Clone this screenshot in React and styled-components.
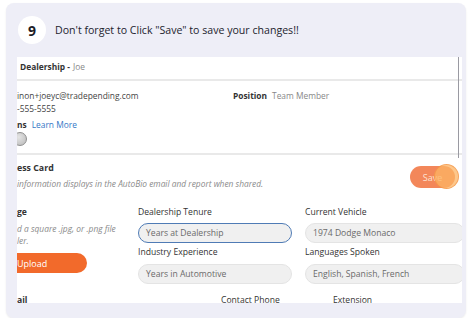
import React from "react";
import styled, { createGlobalStyle } from "styled-components";

const Global = createGlobalStyle`
  html, body { margin: 0; padding: 0; background: #ffffff; }
  body { font-family: "Open Sans", "Liberation Sans", sans-serif; }
`;

const Card = styled.div`
  margin: 3px 0 0 6px;
  width: 460px;
  height: 315px;
  background: #eeeef7;
  border-radius: 8px;
  box-shadow: 0 1px 2px rgba(0, 0, 0, 0.08);
  display: flex;
  flex-direction: column;
`;

const Header = styled.div`
  height: 54px;
  display: flex;
  align-items: center;
  gap: 9px;
  padding-left: 12px;
`;

const StepBadge = styled.div`
  width: 28px;
  height: 28px;
  border-radius: 50%;
  background: #ffffff;
  display: flex;
  align-items: center;
  justify-content: center;
  font-weight: 700;
  font-size: 14px;
  color: #1d1d26;
`;

const Title = styled.div`
  font-size: 10.6px;
  color: #23232e;
`;

const Shot = styled.div`
  margin-left: 11px;
  width: 445px;
  height: 246px;
  background: #ffffff;
  overflow: hidden;
  position: relative;
  color: #333;
  font-size: 8.4px;
  line-height: 13px;
`;

const ScrollThumb = styled.div`
  position: absolute;
  right: 3px;
  top: 0;
  width: 1.5px;
  height: 101px;
  background: #9a9aa2;
`;

const TopRow = styled.div`
  height: 24px;
  box-sizing: border-box;
  display: flex;
  align-items: flex-start;
  padding: 3px 0 0 3px;
  border-bottom: 2px solid #e9e9e9;
`;

const Bold = styled.span`
  font-weight: 700;
  color: #333;
`;

const Muted = styled.span`
  color: #888;
  margin-left: ${(p) => p.$gap || 4}px;
`;

const Info = styled.div`
  height: 74px;
  box-sizing: border-box;
  padding-top: 8px;
  border-bottom: 2px solid #e9e9e9;
  display: grid;
  grid-template-columns: 216px 1fr;
`;

const InfoCol = styled.div`
  display: flex;
  flex-direction: column;
`;

const Line = styled.div`
  color: ${(p) => p.$color || "#444"};
  margin-top: ${(p) => p.$mt || 0}px;
`;

const Link = styled.span`
  color: #3478c6;
  margin-left: 5px;
`;

const Toggle = styled.div`
  margin-left: -4px;
  margin-top: 1px;
  width: 14px;
  height: 14px;
  border-radius: 50%;
  background: radial-gradient(circle at 40% 35%, #e4e4e4, #b9b9b9);
  border: 1px solid #8f8f8f;
  box-sizing: border-box;
`;

const Section = styled.div`
  padding-top: 7px;
`;

const SectionHead = styled.div`
  display: flex;
  justify-content: space-between;
  align-items: flex-start;
`;

const SectionTitle = styled.div`
  font-weight: 700;
  color: #333;
  font-size: 8.8px;
`;

const Hint = styled.div`
  font-style: italic;
  color: #8a8a8a;
  margin-top: ${(p) => p.$mt || 0}px;
  line-height: 12px;
`;

const SaveWrap = styled.div`
  position: relative;
  margin: 4px 7px 0 0;
`;

const SaveButton = styled.div`
  width: 45px;
  height: 22px;
  border-radius: 11px;
  background: #f3875a;
  color: #fde2d2;
  font-size: 9px;
  display: flex;
  align-items: center;
  justify-content: center;
`;

const Highlight = styled.div`
  position: absolute;
  left: 24px;
  top: -2px;
  width: 25px;
  height: 25px;
  border-radius: 50%;
  background: rgba(252, 180, 100, 0.75);
  border: 1px solid rgba(240, 140, 60, 0.6);
  box-sizing: border-box;
`;

const FieldGrid = styled.div`
  margin-top: 16px;
  display: grid;
  grid-template-columns: 121px 167px 1fr;
`;

const Col = styled.div`
  display: flex;
  flex-direction: column;
`;

const Label = styled.div`
  color: #333;
  font-size: 8.6px;
  margin-top: ${(p) => p.$mt || 0}px;
  font-weight: ${(p) => (p.$bold ? 700 : 400)};
`;

const Input = styled.div`
  margin-top: ${(p) => p.$mt || 4}px;
  width: ${(p) => p.$w || 154}px;
  height: 20px;
  box-sizing: border-box;
  border-radius: 10px;
  background: #f0f0f0;
  border: ${(p) => (p.$focus ? "1.5px solid #4f7bb5" : "1px solid #e4e4e4")};
  color: #6a6a6a;
  font-size: 8.6px;
  display: flex;
  align-items: center;
  padding-left: 7px;
`;

const Upload = styled.div`
  margin-top: 6px;
  width: 70px;
  height: 20px;
  border-radius: 0 10px 10px 0;
  background: #f26a2b;
  color: #ffffff;
  display: flex;
  align-items: center;
  font-size: 9px;
`;

const BottomRow = styled.div`
  margin-top: 10px;
  display: grid;
  grid-template-columns: 204px 112px 1fr;
`;

export default function App() {
  return (
    <>
      <Global />
      <Card>
        <Header>
          <StepBadge>9</StepBadge>
          <Title>Don't forget to Click "Save" to save your changes!!</Title>
        </Header>
        <Shot>
          <ScrollThumb />
          <TopRow>
            <Bold>Dealership -</Bold>
            <Muted $gap={3}>Joe</Muted>
          </TopRow>
          <Info>
            <InfoCol>
              <Line>inon+joeyc@tradepending.com</Line>
              <Line>-555-5555</Line>
              <Line $mt={3}>
                <Bold>ns</Bold>
                <Link>Learn More</Link>
              </Line>
              <Toggle />
            </InfoCol>
            <InfoCol>
              <Line>
                <Bold>Position</Bold>
                <Muted $gap={5}>Team Member</Muted>
              </Line>
            </InfoCol>
          </Info>
          <Section>
            <SectionHead>
              <div>
                <SectionTitle>ess Card</SectionTitle>
                <Hint $mt={3}>information displays in the AutoBio email and report when shared.</Hint>
              </div>
              <SaveWrap>
                <SaveButton>Save</SaveButton>
                <Highlight />
              </SaveWrap>
            </SectionHead>
            <FieldGrid>
              <Col>
                <Label $bold>ge</Label>
                <Hint $mt={4}>d a square .jpg, or .png file</Hint>
                <Hint>ler.</Hint>
                <Upload>Upload</Upload>
              </Col>
              <Col>
                <Label>Dealership Tenure</Label>
                <Input $focus $mt={4}>Years at Dealership</Input>
                <Label $mt={3}>Industry Experience</Label>
                <Input $mt={5}>Years in Automotive</Input>
              </Col>
              <Col>
                <Label>Current Vehicle</Label>
                <Input $w={160} $mt={4}>1974 Dodge Monaco</Input>
                <Label $mt={3}>Languages Spoken</Label>
                <Input $w={160} $mt={5}>English, Spanish, French</Input>
              </Col>
            </FieldGrid>
            <BottomRow>
              <Label $bold>ail</Label>
              <Label>Contact Phone</Label>
              <Label>Extension</Label>
            </BottomRow>
          </Section>
        </Shot>
      </Card>
    </>
  );
}
